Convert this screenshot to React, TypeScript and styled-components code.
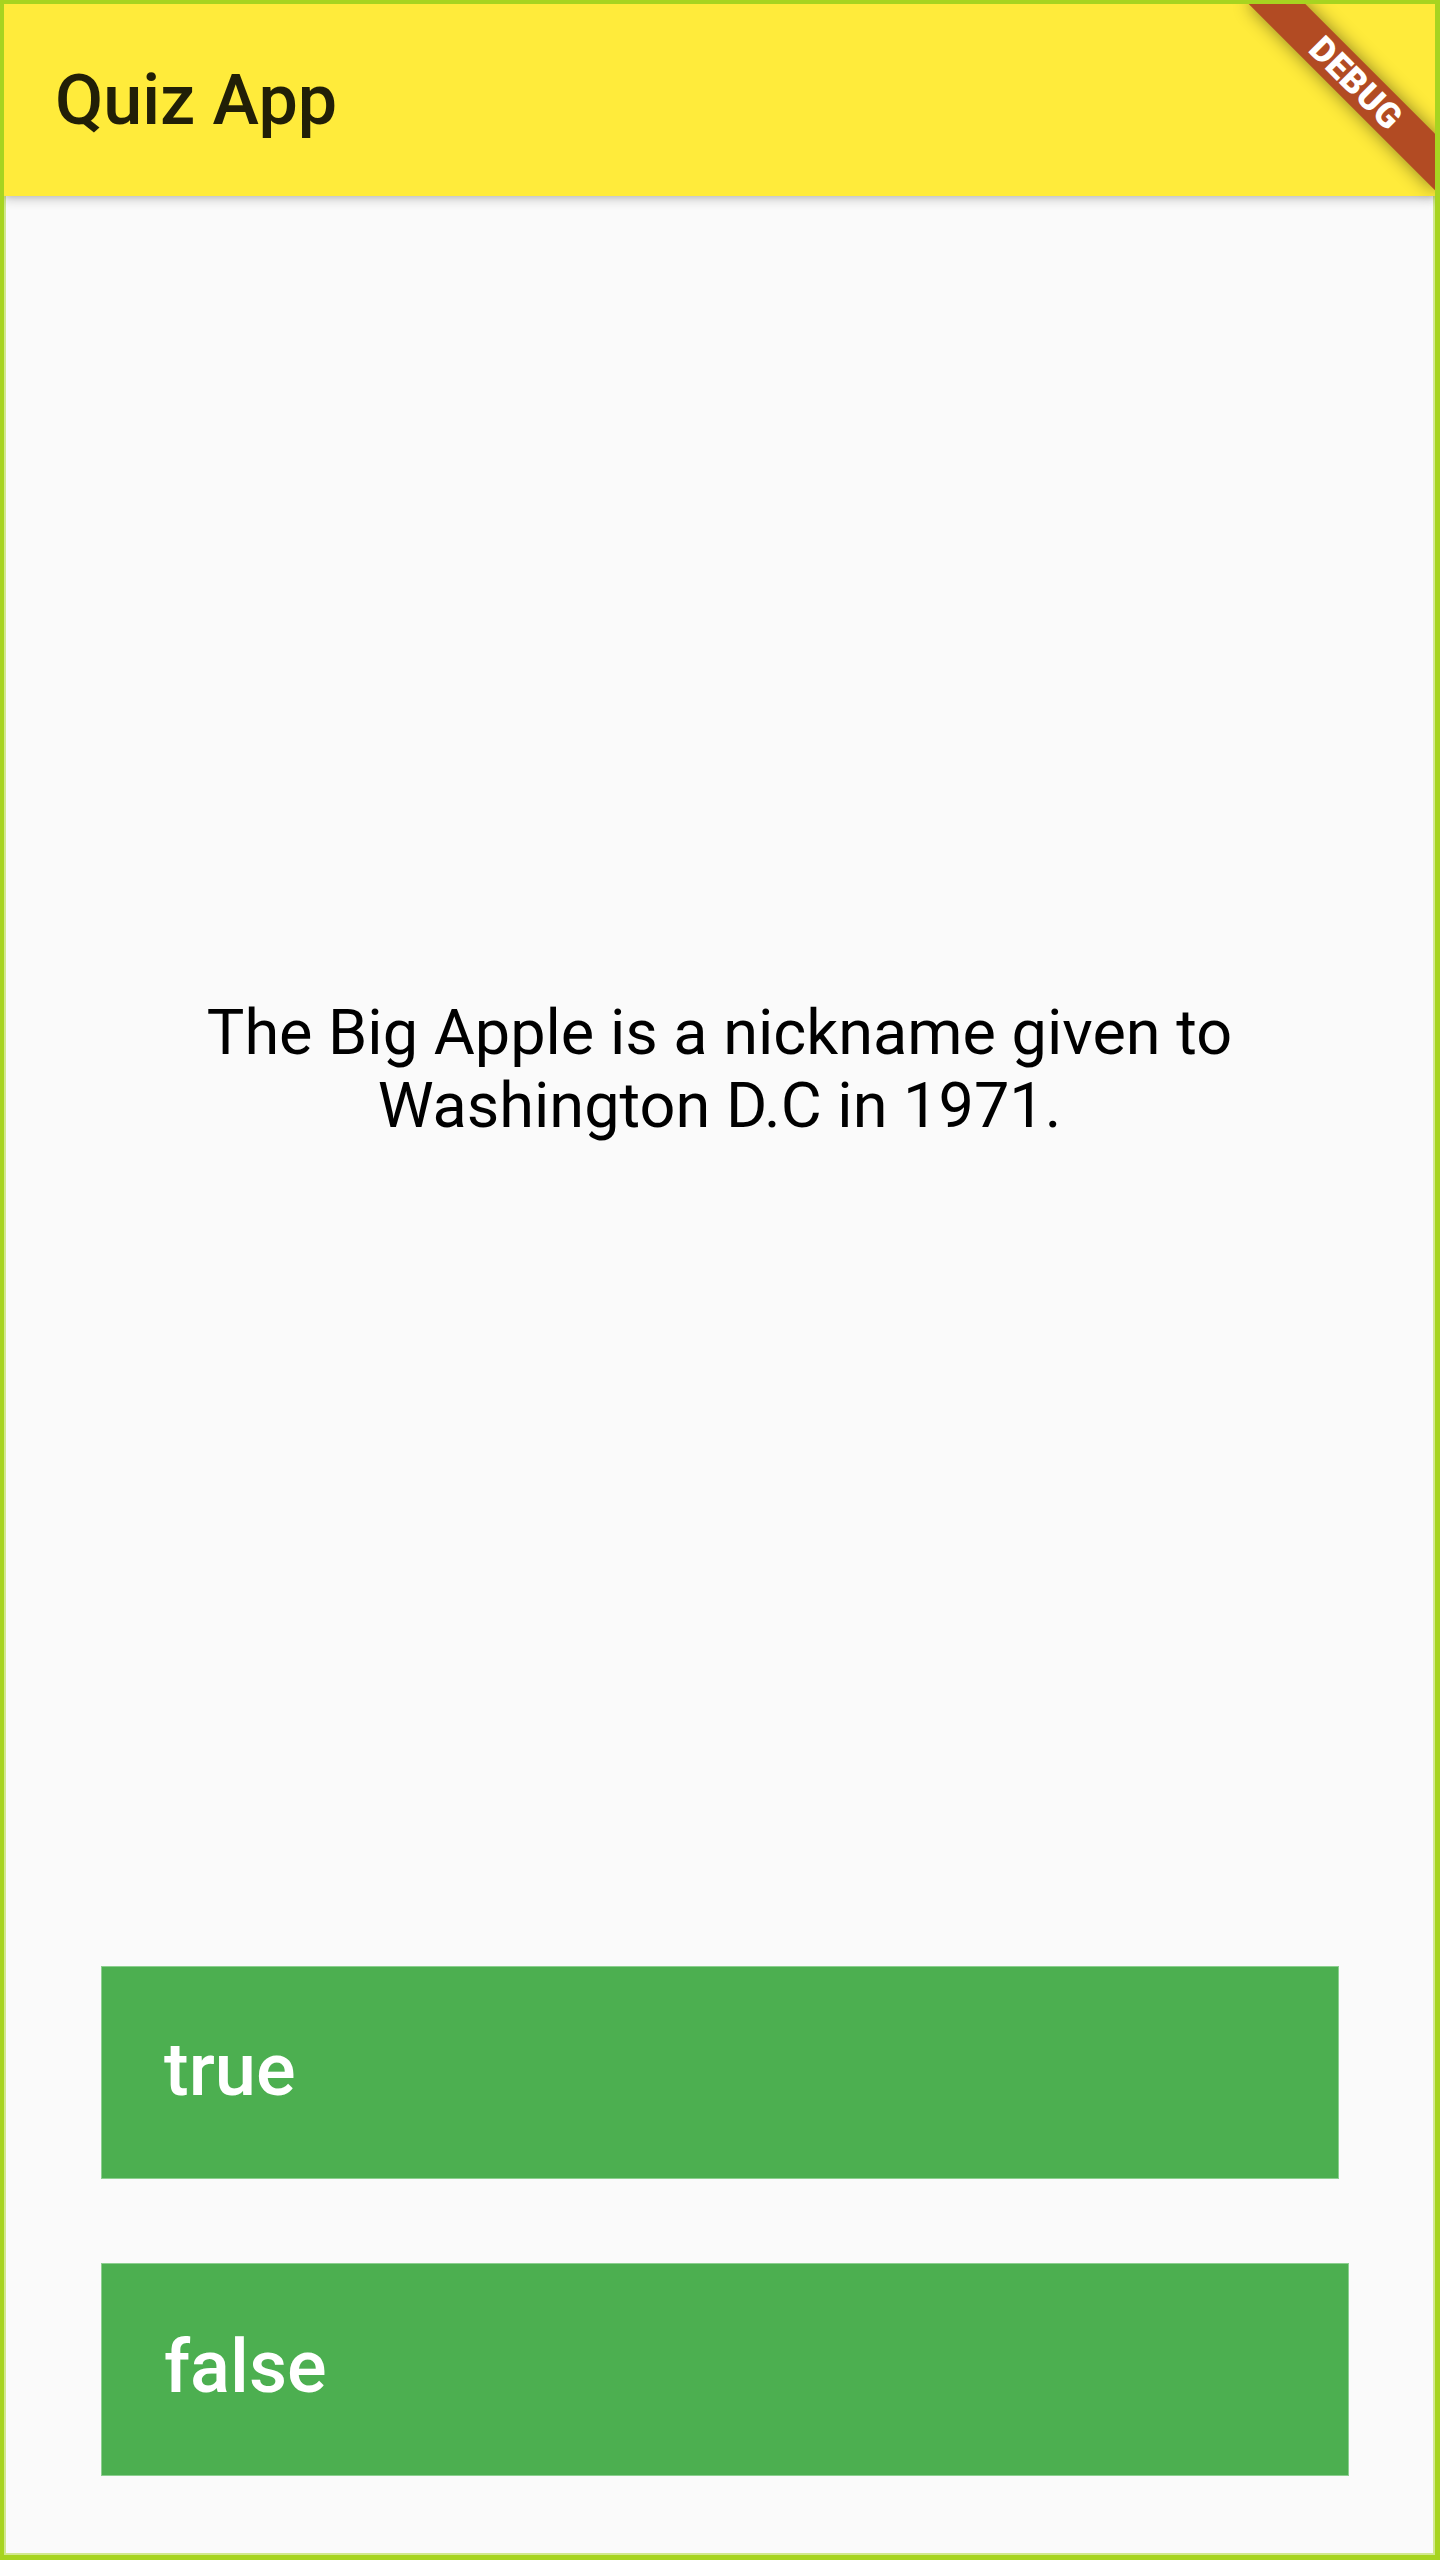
import React from "react";
import styled, { createGlobalStyle } from "styled-components";

const GlobalStyle = createGlobalStyle`
  html, body {
    margin: 0;
    padding: 0;
    background: #fafafa;
  }
  * { box-sizing: border-box; }
`;

const Frame = styled.div`
  position: relative;
  width: 1440px;
  height: 2560px;
  overflow: hidden;
  display: flex;
  flex-direction: column;
  background: #fafafa;
  border-style: solid;
  border-color: #a7d420;
  border-width: 4px 5px 5px 4px;
  box-shadow: inset 0 0 0 2px #d2e88e;
  font-family: Roboto, "Noto Sans", sans-serif;
`;

const AppBar = styled.header`
  position: relative;
  z-index: 1;
  flex: 0 0 192px;
  display: flex;
  align-items: center;
  padding-left: 51px;
  background: #ffeb3b;
  box-shadow: 0 4px 10px rgba(0, 0, 0, 0.18), 0 2px 4px rgba(0, 0, 0, 0.08);
`;

const Title = styled.h1`
  margin: 0;
  font-family: Roboto, sans-serif;
  font-size: 70px;
  font-weight: 500;
  line-height: normal;
  color: rgba(0, 0, 0, 0.87);
`;

const Body = styled.main`
  flex: 1;
  display: flex;
  flex-direction: column;
  padding-bottom: 79px;
`;

const QuestionArea = styled.section`
  flex: 1;
  display: flex;
  align-items: center;
  justify-content: center;
  padding: 0 100px;
`;

const Question = styled.p`
  margin: 0;
  max-width: 1180px;
  text-align: center;
  font-family: Roboto, sans-serif;
  font-size: 63px;
  font-weight: 400;
  line-height: normal;
  color: #000;
`;

const AnswerButton = styled.button<{ $top: number; $right: number }>`
  display: flex;
  align-items: center;
  flex: 0 0 213px;
  margin: ${(p) => p.$top}px ${(p) => p.$right}px 0 97px;
  padding: 0 0 5px 63px;
  border: none;
  border-radius: 0;
  background: #4caf50;
  box-shadow: inset 0 0 0 1px #8ccf8f;
  color: #fff;
  font-family: Roboto, sans-serif;
  font-size: 74px;
  font-weight: 500;
  line-height: 1;
  text-align: left;
  cursor: pointer;
`;

const DebugRibbon = styled.div`
  position: absolute;
  z-index: 5;
  top: 59px;
  right: -53px;
  width: 264px;
  height: 40px;
  transform: rotate(45deg);
  display: flex;
  align-items: center;
  justify-content: center;
  background: #b24b23;
  box-shadow: 0 0 18px rgba(0, 0, 0, 0.45);
  color: #fff;
  font-family: Roboto, sans-serif;
  font-size: 35px;
  font-weight: 900;
  line-height: 1;
  letter-spacing: 0.5px;
`;

const answers = [
  { label: "true", top: 25, right: 96 },
  { label: "false", top: 84, right: 86 },
];

export default function App() {
  return (
    <>
      <GlobalStyle />
      <Frame>
        <AppBar>
          <Title>Quiz App</Title>
        </AppBar>
        <Body>
          <QuestionArea>
            <Question>
              The Big Apple is a nickname given to Washington D.C in 1971.
            </Question>
          </QuestionArea>
          {answers.map((a) => (
            <AnswerButton key={a.label} $top={a.top} $right={a.right}>
              {a.label}
            </AnswerButton>
          ))}
        </Body>
        <DebugRibbon>DEBUG</DebugRibbon>
      </Frame>
    </>
  );
}
